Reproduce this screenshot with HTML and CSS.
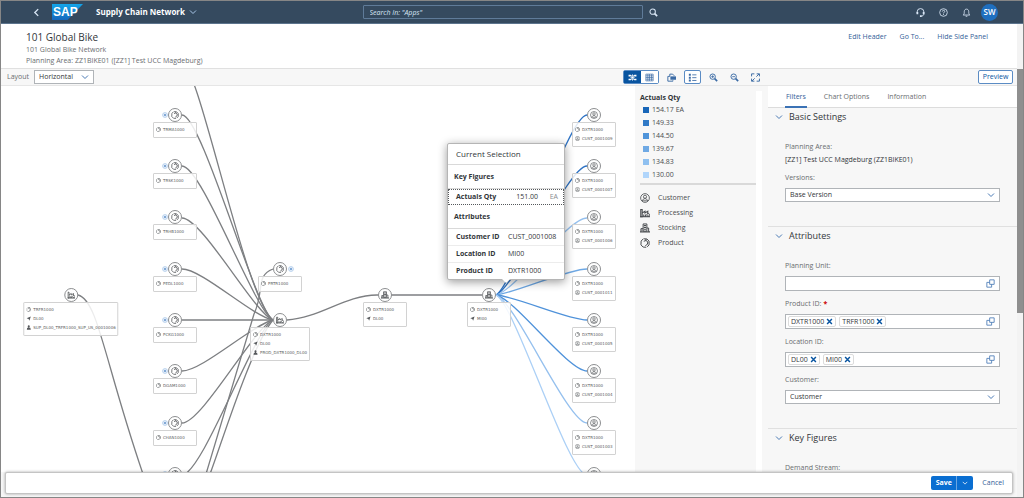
FILE: index.html
```html
<!DOCTYPE html>
<html lang="en">
<head>
<meta charset="utf-8">
<title>Supply Chain Network</title>
<link rel="stylesheet" href="styles.css">
</head>
<body>
<svg class="defs" aria-hidden="true">
  <symbol id="i-product" viewBox="0 0 16 16"><path d="M4.500 1.800 1.800 5 1.500 11l3.500 3.500 5 .3M5.500 1.300l5.500.2 3.500 3.500v6l-3 3.200M6 5.200 9.500 4l3 2.200M9.500 4V1.500M12.500 6.200l-.8 4-3.200 2" fill="none" stroke="currentColor" stroke-width="1.600"/></symbol>
  <symbol id="i-customer" viewBox="0 0 16 16"><circle cx="8" cy="8" r="7" fill="none" stroke="currentColor" stroke-width="1.300"/><circle cx="8" cy="6" r="2.500" fill="none" stroke="currentColor" stroke-width="1.300"/><path d="M3.800 12.800c.4-5 8-5 8.400 0M5 12.500h6" fill="none" stroke="currentColor" stroke-width="1.300"/></symbol>
  <symbol id="i-processing" viewBox="0 0 16 16"><path d="M1.200 2.500h2.300V14H1.200zM3.500 8 8 5v3l4.500-3v4M6 14v-3.500M8.700 14v-3.500" fill="none" stroke="currentColor" stroke-width="1.700"/><path d="M0 13h16v1.800H0z" fill="currentColor"/><circle cx="13" cy="11" r="2.200" fill="none" stroke="currentColor" stroke-width="1.500"/></symbol>
  <symbol id="i-stocking" viewBox="0 0 16 16"><path d="M5 1.500h6V13H5zM1.500 9H5M1.500 9v5M11 8h2.800v6" fill="none" stroke="currentColor" stroke-width="1.600"/><path d="M6.300 3h3.500v1.800H6.300zM6.300 6h3.500v1.800H6.300zM6.300 9h3.500v1.800H6.300zM0 13h16v2.200H0zM2.500 10.500H4v2H2.500z" fill="currentColor"/></symbol>
  <symbol id="i-location" viewBox="0 0 16 16"><path d="M14.500 1.500 10 15 7.500 9.500 1 7z" fill="currentColor"/></symbol>
  <symbol id="i-source" viewBox="0 0 16 16"><path d="M8 1a3 3 0 0 1 2 5.500l-.5 2H13l1.500 6.500h-13L3 8.500h3.500l-.5-2A3 3 0 0 1 8 1z" fill="currentColor"/></symbol>
  <symbol id="i-plus" viewBox="0 0 16 16"><circle cx="8" cy="8" r="6.500" fill="#f2f7fd" stroke="#9dbfe5" stroke-width="1.800"/><path d="M8 5v6M5 8h6" stroke="#3b78bd" stroke-width="2"/></symbol>
  <symbol id="i-down" viewBox="0 0 16 16"><path d="m2 5 6 6 6-6" fill="none" stroke="currentColor" stroke-width="2"/></symbol>
  <symbol id="i-search" viewBox="0 0 16 16"><circle cx="6.500" cy="6.500" r="4.800" fill="none" stroke="currentColor" stroke-width="1.800"/><path d="m10 10 4.500 4.500" stroke="currentColor" stroke-width="3"/></symbol>
  <symbol id="i-help" viewBox="0 0 16 16"><path d="M6.500 1.500h8v8h-8zM6.500 6h-5v8.500H10v-5" fill="none" stroke="currentColor" stroke-width="1.500"/></symbol>
  <symbol id="i-x" viewBox="0 0 16 16"><path d="m2.500 2.500 11 11m0-11-11 11" stroke="currentColor" stroke-width="3.400"/></symbol>
</svg>

<div class="app">
  <header class="shell">
    <div class="shell-start">
      <button class="shell-btn" aria-label="Back"><svg viewBox="0 0 16 16"><path d="M11 2 5 8l6 6" fill="none" stroke="currentColor" stroke-width="2.400"/></svg></button>
      <svg class="logo" viewBox="0 0 31 16" role="img" aria-label="SAP">
        <defs><linearGradient id="lg" x1="0" y1="0" x2="0" y2="1"><stop offset="0" stop-color="#12a5ea"/><stop offset="1" stop-color="#1668bd"/></linearGradient></defs>
        <path d="M0 0h31L15.500 16H0z" fill="url(#lg)"/>
        <text class="logo-text" x="1" y="12">SAP</text>
      </svg>
      <button class="app-title">Supply Chain Network <svg><use href="#i-down"/></svg></button>
    </div>
    <div class="shell-search">
      <input type="search" aria-label="Search" placeholder="Search In: &quot;Apps&quot;">
      <button class="shell-btn" aria-label="Search"><svg><use href="#i-search"/></svg></button>
    </div>
    <div class="shell-tools">
      <button class="shell-btn" aria-label="Support"><svg viewBox="0 0 16 16"><path d="M2 10V7a6 6 0 0 1 12 0v3c0 3-2 4.500-5 4.500" fill="none" stroke="currentColor" stroke-width="1.700"/><path d="M1 7h3v4H1zM12 7h3v4h-3zM7 13h3v3H7z" fill="currentColor"/></svg></button>
      <button class="shell-btn" aria-label="Help"><svg viewBox="0 0 16 16"><circle cx="8" cy="8" r="6.800" fill="none" stroke="currentColor" stroke-width="1.500"/><path d="M5.800 6.200C6 3.300 10.500 3.500 10.200 6.200 10 7.700 8 7.800 8 9.700M8 11v1.500" fill="none" stroke="currentColor" stroke-width="1.600"/></svg></button>
      <button class="shell-btn" aria-label="Notifications"><svg viewBox="0 0 16 16"><path d="M2 12.500c2-1.500 2-3 2-6 0-6 8-6 8 0 0 3 0 4.500 2 6zM6.500 14.700h3" fill="none" stroke="currentColor" stroke-width="1.500"/></svg></button>
      <button class="avatar">SW</button>
    </div>
  </header>

  <div class="body">
    <div class="content">
      <div class="page-head">
        <div>
          <h1>101 Global Bike</h1>
          <p>101 Global Bike Network</p>
          <p>Planning Area: ZZ1BIKE01 ([ZZ1] Test UCC Magdeburg)</p>
        </div>
        <nav class="head-links">
          <a href="#">Edit Header</a><a href="#">Go To...</a><a href="#">Hide Side Panel</a>
        </nav>
      </div>

      <div class="toolbar">
        <label for="layout">Layout</label>
        <span class="picker picker-layout"><select id="layout"><option>Horizontal</option></select><svg><use href="#i-down"/></svg></span>
        <div class="tools">
          <div class="segmented">
            <button class="on" aria-label="Network"><svg viewBox="0 0 16 16"><path d="M3 4.500h10M3 11.500h10M4 8h8M8 2v12M4 4l8 8M12 4l-8 8" stroke="currentColor" stroke-width="1"/><path d="M1 3h4v3H1zM11 3h4v3h-4zM1 10h4v3H1zM11 10h4v3h-4zM6.500 6.500h3v3h-3z" fill="currentColor"/></svg></button>
            <button aria-label="Table"><svg viewBox="0 0 16 16"><path d="M1.500 2h13v12h-13zM1.500 5h13M1.500 8h13M1.500 11h13M5 2v12M8 2v12M11.500 2v12" fill="none" stroke="currentColor" stroke-width="1.200"/></svg></button>
          </div>
          <button class="tool" aria-label="Export"><svg viewBox="0 0 16 16"><path d="M5 6V2h5l3 3M1.500 6v8.500h9V13M1.500 6H5" fill="none" stroke="currentColor" stroke-width="1.700"/><path d="M6 6h10v6H6z" fill="currentColor"/></svg></button>
          <button class="tool framed" aria-label="Legend"><svg viewBox="0 0 16 16"><path d="M1.500 1.500H5V5H1.500zM1.500 6.500H5V10H1.500zM1.500 11.500H5V15H1.500z" fill="currentColor"/><path d="M7.500 3.300H15M7.500 8.300H15M7.500 13.300H15" stroke="currentColor" stroke-width="1.500"/></svg></button>
          <button class="tool" aria-label="Zoom in"><svg viewBox="0 0 16 16"><circle cx="6.500" cy="6.500" r="4.800" fill="none" stroke="currentColor" stroke-width="1.700"/><path d="M4 6.500h5M6.500 4v5" stroke="currentColor" stroke-width="1.500"/><path d="m10 10 4.500 4.500" stroke="currentColor" stroke-width="3"/></svg></button>
          <button class="tool" aria-label="Zoom out"><svg viewBox="0 0 16 16"><circle cx="6.500" cy="6.500" r="4.800" fill="none" stroke="currentColor" stroke-width="1.700"/><path d="M4 6.500h5" stroke="currentColor" stroke-width="1.500"/><path d="m10 10 4.500 4.500" stroke="currentColor" stroke-width="3"/></svg></button>
          <button class="tool" aria-label="Full screen"><svg viewBox="0 0 16 16"><path d="M1 6V1.500h5M10 1.500h5V6M15 10v4.500h-5M6 14.500H1V10M9.500 6.500l5-5M6.500 9.500l-5 5" fill="none" stroke="currentColor" stroke-width="1.700"/></svg></button>
        </div>
        <button class="preview">Preview</button>
      </div>

      <main class="main">
        <section class="chart" aria-label="Network chart">
          <svg class="edges" width="634" height="420" viewBox="1 86 634 420" aria-hidden="true">
            <g class="e-grey">
              <path d="M182 63C199 63 245 300 273 320"/>
              <path d="M182 115C202 115 255 310 273 320"/>
              <path d="M182 166C202 166 255 312 273 320"/>
              <path d="M182 218C202 218 255 314 273 320"/>
              <path d="M182 269C202 269 252 316 273 320"/>
              <path d="M182 320H273"/>
              <path d="M182 371C202 371 252 325 273 320"/>
              <path d="M182 423C202 423 255 326 273 320"/>
              <path d="M182 475C202 475 255 328 273 320"/>
              <path d="M210 474C222 442 252 345 273 320"/>
              <path d="M273 269C255 276 265 290 254 314L206 474"/>
              <path d="M78 295C98 300 104 360 143 474"/>
              <path d="M287 320C320 318 345 295 377 295H482"/>
            </g>
            <g class="e-blue">
              <path class="b1" d="M496 295C515 285 568 115 587 115"/>
              <path class="b2" d="M496 295C515 288 568 166 587 166"/>
              <path class="b5" d="M496 295C515 291 568 218 587 218"/>
              <path class="b4" d="M496 295C515 293 568 269 587 269"/>
              <path class="b3" d="M496 295C515 296 568 320 587 320"/>
              <path class="b3" d="M496 295C515 299 568 371 587 371"/>
              <path class="b5" d="M496 295C515 301 568 423 587 423"/>
              <path class="b6" d="M496 295C515 304 568 475 587 475"/>
            </g>
          </svg>

          <div class="node" style="left:70px;top:202px"><span class="ring"><svg><use href="#i-processing"/></svg></span><ul><li><svg><use href="#i-product"/></svg>TRFR1000</li><li><svg><use href="#i-location"/></svg>DL00</li><li><svg><use href="#i-source"/></svg>SUP_DL00_TRFR1000_SUP_US_00010006</li></ul></div>

          <div class="node std" style="left:174px;top:-30px"><span class="ring"><svg><use href="#i-product"/></svg></span><ul><li></li></ul></div>
          <div class="node std" style="left:174px;top:22px"><svg class="plus"><use href="#i-plus"/></svg><span class="ring"><svg><use href="#i-product"/></svg></span><ul><li><svg><use href="#i-product"/></svg>TRMA1000</li></ul></div>
          <div class="node std" style="left:174px;top:73px"><svg class="plus"><use href="#i-plus"/></svg><span class="ring"><svg><use href="#i-product"/></svg></span><ul><li><svg><use href="#i-product"/></svg>TRSK1000</li></ul></div>
          <div class="node std" style="left:174px;top:124px"><svg class="plus"><use href="#i-plus"/></svg><span class="ring"><svg><use href="#i-product"/></svg></span><ul><li><svg><use href="#i-product"/></svg>TRHB1000</li></ul></div>
          <div class="node std" style="left:174px;top:176px"><svg class="plus"><use href="#i-plus"/></svg><span class="ring"><svg><use href="#i-product"/></svg></span><ul><li><svg><use href="#i-product"/></svg>PEDL1000</li></ul></div>
          <div class="node std" style="left:174px;top:227px"><svg class="plus"><use href="#i-plus"/></svg><span class="ring"><svg><use href="#i-product"/></svg></span><ul><li><svg><use href="#i-product"/></svg>PCKG1000</li></ul></div>
          <div class="node std" style="left:174px;top:278px"><svg class="plus"><use href="#i-plus"/></svg><span class="ring"><svg><use href="#i-product"/></svg></span><ul><li><svg><use href="#i-product"/></svg>DGAM1000</li></ul></div>
          <div class="node std" style="left:174px;top:330px"><svg class="plus"><use href="#i-plus"/></svg><span class="ring"><svg><use href="#i-product"/></svg></span><ul><li><svg><use href="#i-product"/></svg>CHAN1000</li></ul></div>
          <div class="node std" style="left:174px;top:381px"><svg class="plus"><use href="#i-plus"/></svg><span class="ring"><svg><use href="#i-product"/></svg></span></div>

          <div class="node std" style="left:279px;top:176px"><svg class="plus after"><use href="#i-plus"/></svg><span class="ring"><svg><use href="#i-product"/></svg></span><ul><li><svg><use href="#i-product"/></svg>PRTR1000</li></ul></div>
          <div class="node" style="left:279px;top:227px"><span class="ring"><svg><use href="#i-processing"/></svg></span><ul><li><svg><use href="#i-product"/></svg>DXTR1000</li><li><svg><use href="#i-location"/></svg>DL00</li><li><svg><use href="#i-source"/></svg>PROD_DXTR1000_DL00</li></ul></div>
          <div class="node std" style="left:384px;top:202px"><span class="ring"><svg><use href="#i-stocking"/></svg></span><ul><li><svg><use href="#i-product"/></svg>DXTR1000</li><li><svg><use href="#i-location"/></svg>DL00</li></ul></div>
          <div class="node std" style="left:488px;top:202px"><span class="ring"><svg><use href="#i-stocking"/></svg></span><ul><li><svg><use href="#i-product"/></svg>DXTR1000</li><li><svg><use href="#i-location"/></svg>MI00</li></ul></div>

          <div class="node std" style="left:593px;top:22px"><span class="ring"><svg><use href="#i-customer"/></svg></span><ul><li><svg><use href="#i-product"/></svg>DXTR1000</li><li><svg><use href="#i-customer"/></svg>CUST_0001009</li></ul></div>
          <div class="node std" style="left:593px;top:73px"><span class="ring"><svg><use href="#i-customer"/></svg></span><ul><li><svg><use href="#i-product"/></svg>DXTR1000</li><li><svg><use href="#i-customer"/></svg>CUST_0001007</li></ul></div>
          <div class="node std" style="left:593px;top:124px"><span class="ring"><svg><use href="#i-customer"/></svg></span><ul><li><svg><use href="#i-product"/></svg>DXTR1000</li><li><svg><use href="#i-customer"/></svg>CUST_0001006</li></ul></div>
          <div class="node std" style="left:593px;top:176px"><span class="ring"><svg><use href="#i-customer"/></svg></span><ul><li><svg><use href="#i-product"/></svg>DXTR1000</li><li><svg><use href="#i-customer"/></svg>CUST_0001011</li></ul></div>
          <div class="node std" style="left:593px;top:227px"><span class="ring"><svg><use href="#i-customer"/></svg></span><ul><li><svg><use href="#i-product"/></svg>DXTR1000</li><li><svg><use href="#i-customer"/></svg>CUST_0001005</li></ul></div>
          <div class="node std" style="left:593px;top:278px"><span class="ring"><svg><use href="#i-customer"/></svg></span><ul><li><svg><use href="#i-product"/></svg>DXTR1000</li><li><svg><use href="#i-customer"/></svg>CUST_0001004</li></ul></div>
          <div class="node std" style="left:593px;top:330px"><span class="ring"><svg><use href="#i-customer"/></svg></span><ul><li><svg><use href="#i-product"/></svg>DXTR1000</li><li><svg><use href="#i-customer"/></svg>CUST_0001003</li></ul></div>
          <div class="node std" style="left:593px;top:381px"><span class="ring"><svg><use href="#i-customer"/></svg></span></div>

          <div class="popover" role="dialog" aria-label="Current Selection">
            <h2>Current Selection</h2>
            <h3>Key Figures</h3>
            <div class="kf"><b>Actuals Qty</b><span>151.00</span><i>EA</i></div>
            <h3>Attributes</h3>
            <dl>
              <div><dt>Customer ID</dt><dd>CUST_0001008</dd></div>
              <div><dt>Location ID</dt><dd>MI00</dd></div>
              <div><dt>Product ID</dt><dd>DXTR1000</dd></div>
            </dl>
          </div>
        </section>

        <aside class="legend">
          <h2>Actuals Qty</h2>
          <ul class="scale">
            <li class="s1">154.17 EA</li><li class="s2">149.33</li><li class="s3">144.50</li><li class="s4">139.67</li><li class="s5">134.83</li><li class="s6">130.00</li>
          </ul>
          <ul class="types">
            <li><svg><use href="#i-customer"/></svg>Customer</li>
            <li><svg><use href="#i-processing"/></svg>Processing</li>
            <li><svg><use href="#i-stocking"/></svg>Stocking</li>
            <li><svg><use href="#i-product"/></svg>Product</li>
          </ul>
        </aside>
        <div class="legend-track"></div>

        <aside class="panel">
          <nav class="tabs"><a class="on" href="#">Filters</a><a href="#">Chart Options</a><a href="#">Information</a></nav>
          <section>
            <h2><svg><use href="#i-down"/></svg>Basic Settings</h2>
            <div class="fields">
              <div class="field text"><span class="lbl">Planning Area:</span><span>[ZZ1] Test UCC Magdeburg (ZZ1BIKE01)</span></div>
              <div class="field"><label for="ver">Versions:</label><span class="picker"><select id="ver"><option>Base Version</option></select><svg><use href="#i-down"/></svg></span></div>
            </div>
          </section>
          <section>
            <h2><svg><use href="#i-down"/></svg>Attributes</h2>
            <div class="fields">
              <div class="field"><label for="unit">Planning Unit:</label><div class="tokens"><input id="unit"><svg><use href="#i-help"/></svg></div></div>
              <div class="field"><label for="prod">Product ID:<b class="req">*</b></label><div class="tokens"><span class="token">DXTR1000<button aria-label="Remove DXTR1000"><svg><use href="#i-x"/></svg></button></span><span class="token">TRFR1000<button aria-label="Remove TRFR1000"><svg><use href="#i-x"/></svg></button></span><input id="prod"><svg><use href="#i-help"/></svg></div></div>
              <div class="field"><label for="loc">Location ID:</label><div class="tokens"><span class="token">DL00<button aria-label="Remove DL00"><svg><use href="#i-x"/></svg></button></span><span class="token">MI00<button aria-label="Remove MI00"><svg><use href="#i-x"/></svg></button></span><input id="loc"><svg><use href="#i-help"/></svg></div></div>
              <div class="field"><label for="cust">Customer:</label><span class="picker"><select id="cust"><option>Customer</option></select><svg><use href="#i-down"/></svg></span></div>
            </div>
          </section>
          <section>
            <h2><svg><use href="#i-down"/></svg>Key Figures</h2>
            <div class="fields"><div class="field"><span class="lbl">Demand Stream:</span></div></div>
          </section>
        </aside>
      </main>

      <footer class="footer">
        <div class="save"><button>Save</button><button aria-label="More save options"><svg><use href="#i-down"/></svg></button></div>
        <button class="cancel">Cancel</button>
      </footer>
    </div>
    <div class="scrollbar"><div class="thumb"></div></div>
  </div>
</div>
</body>
</html>
```

FILE: styles.css
```css
* { box-sizing: border-box; }
body, h1, h2, h3, p, ul, dl, dd { margin: 0; padding: 0; }
ul { list-style: none; }
body { font: 7px/10px "Open Sans", "Noto Sans", sans-serif; color: #4a4d50; background: #f7f7f7; }
button, input, select { font: inherit; color: inherit; background: none; border: 0; padding: 0; margin: 0; border-radius: 0; outline: 0; appearance: none; }
a { color: #346199; text-decoration: none; }
svg { display: block; flex: none; }
.defs { position: absolute; width: 0; height: 0; }

.app { display: flex; flex-direction: column; height: 100vh; border: 1px solid #868686; }

.shell { display: grid; grid-template-columns: 1fr auto 1fr; align-items: center; height: 23px; padding: 0 25px 0 31px; background: #354a5f; border-bottom: 1px solid #5c748d; color: #d8e6f5; }
.shell-start { display: flex; align-items: center; }
.shell-btn svg { width: 9px; height: 9px; }
.logo { width: 31px; height: 16px; margin-left: 11px; }
.logo-text { font: bold 12px "Liberation Sans", sans-serif; fill: #fff; }
.app-title { display: flex; align-items: center; gap: 4px; margin-left: 13px; font-size: 8px; font-weight: 700; color: #fff; }
.app-title svg { width: 8px; height: 8px; color: #a9c6e8; }
.shell-search { display: flex; align-items: center; gap: 6px; width: 295px; margin-right: 10px; }
.shell-search input { flex: 1; height: 14px; border: 1px solid #5f7b99; border-radius: 1px; padding: 0 6px; }
.shell-search input::placeholder { color: #d8e6f5; font-style: italic; opacity: 1; }
.shell-tools { display: flex; align-items: center; justify-content: flex-end; gap: 14px; }
.avatar { width: 17px; height: 17px; margin-left: -4px; border-radius: 50%; background: #1f6fbf; color: #fff; font-size: 8px; font-weight: 600; }

.body { display: flex; flex: 1; min-height: 0; }
.content { display: flex; flex: 1; flex-direction: column; min-width: 0; }
.scrollbar { width: 6px; padding-top: 45px; background: #f3f3f3; }
.thumb { height: 244px; background: #8f8f8f; }

.page-head { display: flex; justify-content: space-between; height: 44px; padding: 6px 29px 0 25px; background: #fff; color: #6a6d70; }
.page-head h1 { font-size: 10px; line-height: 14px; font-weight: 400; color: #32363a; }
.page-head p { line-height: 11px; }
.head-links { display: flex; gap: 13px; padding-top: 2px; }

.toolbar { display: flex; align-items: center; height: 18px; padding: 0 4px 0 6px; border-top: 1px solid #e0e0e0; border-bottom: 1px solid #e6e6e6; color: #6a6d70; }
.picker { display: grid; align-items: center; color: #32363a; }
.picker select { grid-area: 1 / 1; width: 100%; height: 14px; padding: 0 4px; border: 1px solid #b0b4b8; background: #fff; }
.picker svg { grid-area: 1 / 1; justify-self: end; margin-right: 5px; width: 8px; height: 8px; color: #4a7ab5; pointer-events: none; }
.picker-layout { width: 60px; margin-left: 5px; }
.tools { display: flex; align-items: center; margin-left: auto; margin-right: 214px; color: #3b6ba5; }
.tools svg { width: 9px; height: 9px; }
.segmented { display: flex; border: 1px solid #5b8cc4; border-radius: 2px; }
.segmented button { display: grid; place-items: center; width: 17px; height: 12px; background: #fff; }
.segmented .on { background: #0854a0; color: #fff; }
.tool { display: grid; place-items: center; width: 17px; height: 14px; margin-left: 4px; }
.framed { border: 1px solid #5b8cc4; border-radius: 2px; background: #fff; }
.preview { height: 14px; width: 35px; border: 1px solid #5b8cc4; border-radius: 2px; background: #fff; color: #0854a0; }

.main { display: flex; flex: 1; min-height: 0; }
.chart { position: relative; flex: 1; min-width: 0; overflow: hidden; background: #fff; }
.edges { position: absolute; left: 0; top: 0; }
.edges path { fill: none; stroke-width: 1.300; }
.e-grey { stroke: #7d7f82; }
.b1, .b2 { stroke: #2f73c4; }
.b3 { stroke: #4f92da; }
.b4 { stroke: #6ea8e4; }
.b5 { stroke: #95c0ee; }
.b6 { stroke: #acd0f6; }

.node { position: absolute; display: flex; flex-direction: column; align-items: center; transform: translateX(-50%); font: 4px/9px "DejaVu Sans", sans-serif; color: #5c5e60; }
.std { width: 44px; }
.ring { display: grid; place-items: center; width: 14px; height: 14px; border: 1px solid #8c8e90; border-radius: 50%; background: #fff; color: #55585b; }
.ring svg { width: 8px; height: 8px; }
.node ul { width: 100%; padding: 2px 2px 3px; border: 1px solid #d2d2d2; border-radius: 1px; background: rgba(255, 255, 255, .85); }
.node li { display: flex; align-items: center; gap: 2px; height: 9px; white-space: nowrap; }
.node li svg { width: 5px; height: 5px; color: #55585b; }
.plus { position: absolute; left: 9px; top: 4px; width: 6px; height: 6px; }
.plus.after { left: 30px; }

.popover { position: absolute; left: 446px; top: 57px; width: 118px; border: 1px solid #b5b5b5; border-radius: 2px; background: #fff; box-shadow: 0 2px 10px rgba(0, 0, 0, .4); color: #32363a; }
.popover::after { content: ""; position: absolute; left: 54px; bottom: -4px; border: 4px solid transparent; border-top-color: #fff; border-bottom: 0; }
.popover h2 { padding: 0 8px; font-size: 8px; line-height: 20px; font-weight: 400; border-bottom: 1px solid #d9d9d9; }
.popover h3 { padding: 0 6px; font-size: 7px; line-height: 23px; font-weight: 700; border-bottom: 1px solid #d9d9d9; }
.kf { display: flex; align-items: center; height: 16px; padding: 0 5px 0 7px; border: 1px dotted #55585b; }
.kf b { flex: 1; }
.kf i { width: 20px; text-align: right; font-style: normal; color: #8a8d90; }
.popover dl div { display: grid; grid-template-columns: 52px 1fr; padding: 0 0 0 8px; line-height: 16px; white-space: nowrap; }
.popover dl div + div { border-top: 1px solid #ececec; }
.popover dt { font-weight: 700; }

.legend { width: 121px; padding: 7px 0 0 5px; }
.legend h2 { font-size: 7px; line-height: 10px; font-weight: 700; color: #32363a; }
.scale { padding: 0 0 2px 3px; border-bottom: 2px solid #d9d9d9; }
.scale li { --c: #1866b8; display: flex; align-items: center; gap: 3px; height: 13px; }
.scale li::before { content: ""; width: 6px; height: 6px; background: var(--c); }
.scale .s2 { --c: #3079c6; }
.scale .s3 { --c: #4f94da; }
.scale .s4 { --c: #6fa9e4; }
.scale .s5 { --c: #8fc0f0; }
.scale .s6 { --c: #b0d5fb; }
.types { padding-top: 5px; }
.types li { display: flex; align-items: center; gap: 8px; height: 15px; }
.types svg { width: 10px; height: 10px; }
.legend-track { width: 6px; margin: 5px 6px 0 0; background: #fff; }

.panel { width: 249px; overflow: hidden; color: #32363a; }
.tabs { display: flex; gap: 16px; height: 22px; padding: 0 17px; background: #fff; border-bottom: 1px solid #dcdcdc; line-height: 22px; }
.tabs a { height: 22px; padding: 0 1px; color: #6a6d70; border-bottom: 2px solid transparent; }
.tabs .on { color: #346199; border-color: #3b72b5; }
.panel section + section { border-top: 1px solid #e0e0e0; }
.panel h2 { display: flex; align-items: center; gap: 6px; height: 17px; padding-left: 7px; font-size: 9px; font-weight: 400; }
.panel h2 svg { width: 8px; height: 8px; color: #4a7ab5; }
.fields { display: flex; flex-direction: column; gap: 8px; padding: 17px 17px 24px; }
.field { display: flex; flex-direction: column; gap: 5px; }
.text { gap: 3px; }
.field label, .lbl { color: #6a6d70; }
.req { margin-left: 2px; color: #c00; }
.tokens { display: flex; align-items: center; gap: 3px; height: 15px; padding: 0 4px 0 2px; border: 1px solid #b0b4b8; background: #fff; }
.tokens input { flex: 1; min-width: 0; }
.tokens > svg { width: 9px; height: 9px; color: #4a7ab5; }
.token { display: flex; align-items: center; gap: 2px; height: 11px; padding: 0 2px; border: 1px solid #dcdcdc; border-radius: 2px; }
.token svg { width: 7px; height: 7px; color: #0854a0; }

.footer { display: flex; align-items: center; justify-content: flex-end; gap: 9px; height: 22px; margin: 0 4px 3px; padding: 0 8px; border: 1px solid #c4c4c4; border-radius: 2px; background: #fff; box-shadow: 0 0 3px rgba(0, 0, 0, .35); z-index: 1; }
.save { display: flex; height: 14px; border-radius: 2px; overflow: hidden; background: #0a6ed1; color: #fff; }
.save button { display: grid; place-items: center; width: 25px; font-weight: 700; }
.save button + button { width: 17px; border-left: 1px solid #6aa6e3; }
.save svg { width: 6px; height: 6px; }
.cancel { color: #346199; }
```
